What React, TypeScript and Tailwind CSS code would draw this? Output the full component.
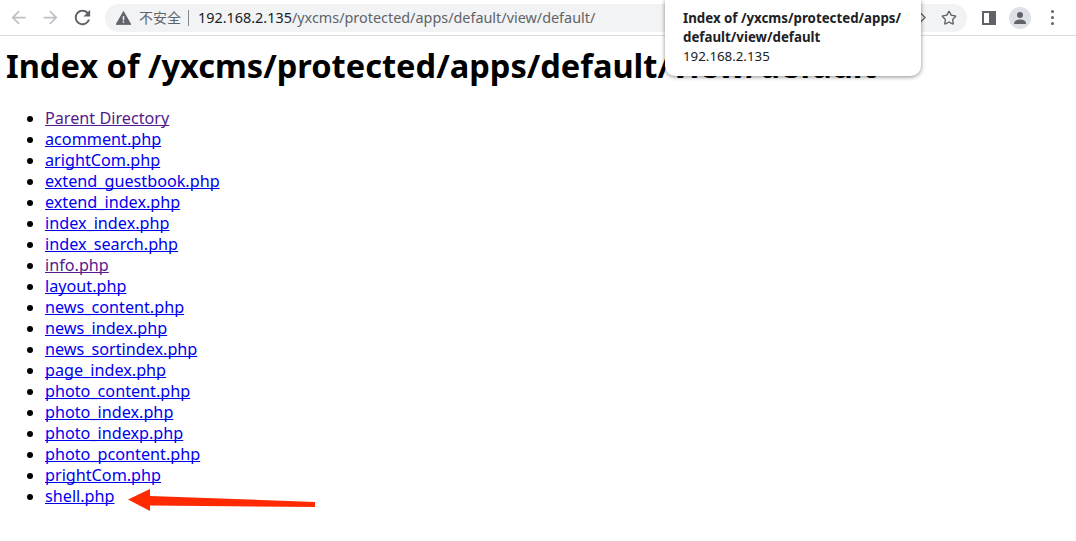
import { Star } from 'lucide-react';

const files = [
  'acomment.php', 'arightCom.php', 'extend_guestbook.php', 'extend_index.php', 'index_index.php',
  'index_search.php', 'info.php', 'layout.php', 'news_content.php', 'news_index.php', 'news_sortindex.php',
  'page_index.php', 'photo_content.php', 'photo_index.php', 'photo_indexp.php', 'photo_pcontent.php',
  'prightCom.php', 'shell.php',
];

const Toolbar = () => (
  <div className="h-9 flex items-center border-b border-[#dadce0] bg-white">
    <svg viewBox="0 0 24 24" className="w-[21px] h-[21px] ml-[8px] text-[#bdc1c6] shrink-0" fill="currentColor">
      <path d="M20 11H7.83l5.59-5.59L12 4l-8 8 8 8 1.41-1.41L7.83 13H20v-2z" />
    </svg>
    <svg viewBox="0 0 24 24" className="w-[21px] h-[21px] ml-[11px] text-[#bdc1c6] shrink-0" fill="currentColor">
      <path d="M4 11h12.17l-5.59-5.59L12 4l8 8-8 8-1.41-1.41L16.17 13H4v-2z" />
    </svg>
    <svg viewBox="0 0 24 24" className="w-[23px] h-[23px] ml-[10px] text-[#5f6368] shrink-0" fill="currentColor">
      <path d="M17.65 6.35C16.2 4.9 14.21 4 12 4c-4.42 0-7.99 3.58-7.99 8s3.57 8 7.99 8c3.73 0 6.84-2.55 7.73-6h-2.08c-.82 2.33-3.04 4-5.65 4-3.31 0-6-2.69-6-6s2.69-6 6-6c1.66 0 3.14.69 4.22 1.78L13 11h7V4l-2.35 2.35z" />
    </svg>
    <div className="ml-[11px] w-[862px] h-[28px] rounded-full bg-[#f1f3f4] flex items-center pl-[11px] relative shrink-0">
      <svg viewBox="0 0 16 14" className="w-[15px] h-[14px] text-[#5f6368]" fill="currentColor">
        <path d="M8 0 L16 14 H0 Z" stroke="currentColor" strokeLinejoin="round" strokeWidth="0.8" />
        <rect x="7.2" y="5" width="1.6" height="4.5" fill="#f1f3f4" />
        <rect x="7.2" y="10.5" width="1.6" height="1.6" fill="#f1f3f4" />
      </svg>
      <span className="ml-[8px] text-[14px] text-[#5f6368] font-['Noto_Sans_CJK_SC',sans-serif]">不安全</span>
      <span className="ml-[7px] w-px h-[16px] bg-[#80868b]" />
      <span className="ml-[9px] text-[14.4px] text-[#5f6368]"><span className="text-[#202124]">192.168.2.135</span>/yxcms/protected/apps/default/view/default/</span>
      <svg viewBox="0 0 14 14" className="absolute right-[41px] w-[13px] h-[13px] text-[#5f6368]" fill="none" stroke="currentColor" strokeWidth="1.5">
        <path d="M7 1 L13 7 L7 13 L1 7 Z" />
      </svg>
      <Star className="absolute right-[10px] w-[16px] h-[16px] text-[#5f6368]" strokeWidth={2} />
    </div>
    <svg viewBox="0 0 14 14" className="w-[14px] h-[14px] ml-[15px] text-[#5f6368] shrink-0" fill="none" stroke="currentColor" strokeWidth="2">
      <rect x="1" y="1" width="12" height="12" />
      <rect x="8" y="1" width="5" height="12" fill="currentColor" />
    </svg>
    <div className="ml-[13px] w-[22px] h-[22px] rounded-full bg-[#dee1e6] flex items-center justify-center shrink-0">
      <svg viewBox="0 0 14 14" className="w-[14px] h-[14px] text-[#5f6368]" fill="currentColor">
        <circle cx="7" cy="4" r="3" />
        <path d="M1 13 C1 9.5 4 8.5 7 8.5 C10 8.5 13 9.5 13 13 Z" />
      </svg>
    </div>
    <div className="ml-[20px] flex flex-col gap-[3px]">
      <span className="w-[3px] h-[3px] rounded-full bg-[#5f6368]" />
      <span className="w-[3px] h-[3px] rounded-full bg-[#5f6368]" />
      <span className="w-[3px] h-[3px] rounded-full bg-[#5f6368]" />
    </div>
  </div>
);

export default function App() {
  return (
    <div className="relative w-[1076px] h-[541px] overflow-hidden bg-white text-black font-['Noto_Sans',sans-serif]">
      <Toolbar />
      <h1 className="mt-[10px] ml-[6px] text-[32.6px] leading-[40px] font-bold whitespace-nowrap">Index of /yxcms/protected/apps/default/view/default</h1>
      <ul className="mt-[22px] pl-[45px] list-disc text-[16.2px] leading-[21px]">
        <li><a href="#" className="underline [text-decoration-skip-ink:none] text-[#551a8b]">Parent Directory</a></li>
        {files.map((name) => (
          <li key={name}>
            <a href="#" className={name === 'info.php' ? 'underline [text-decoration-skip-ink:none] text-[#551a8b]' : 'underline [text-decoration-skip-ink:none] text-[#0000ee]'}>{name}</a>
          </li>
        ))}
      </ul>

      {/* tooltip over the tab strip */}
      <div className="absolute left-[665px] top-0 w-[256px] h-[76px] bg-white rounded-b-[10px] shadow-[0_1px_4px_rgba(0,0,0,0.45)] pl-[18px] pt-[9px] text-[13.3px] leading-[19px] text-[#202124]">
        <div className="font-bold">Index of /yxcms/protected/apps/<br />default/view/default</div>
        <div>192.168.2.135</div>
      </div>

      {/* red annotation arrow */}
      <svg className="absolute left-[125px] top-[486px]" width="194" height="28" viewBox="0 0 194 28">
        <path d="M3 13.5 L25 3 L25 10 L190 16 L190 21 L25 19.5 L25 25 Z" fill="#ff2a00" />
      </svg>
    </div>
  );
}
